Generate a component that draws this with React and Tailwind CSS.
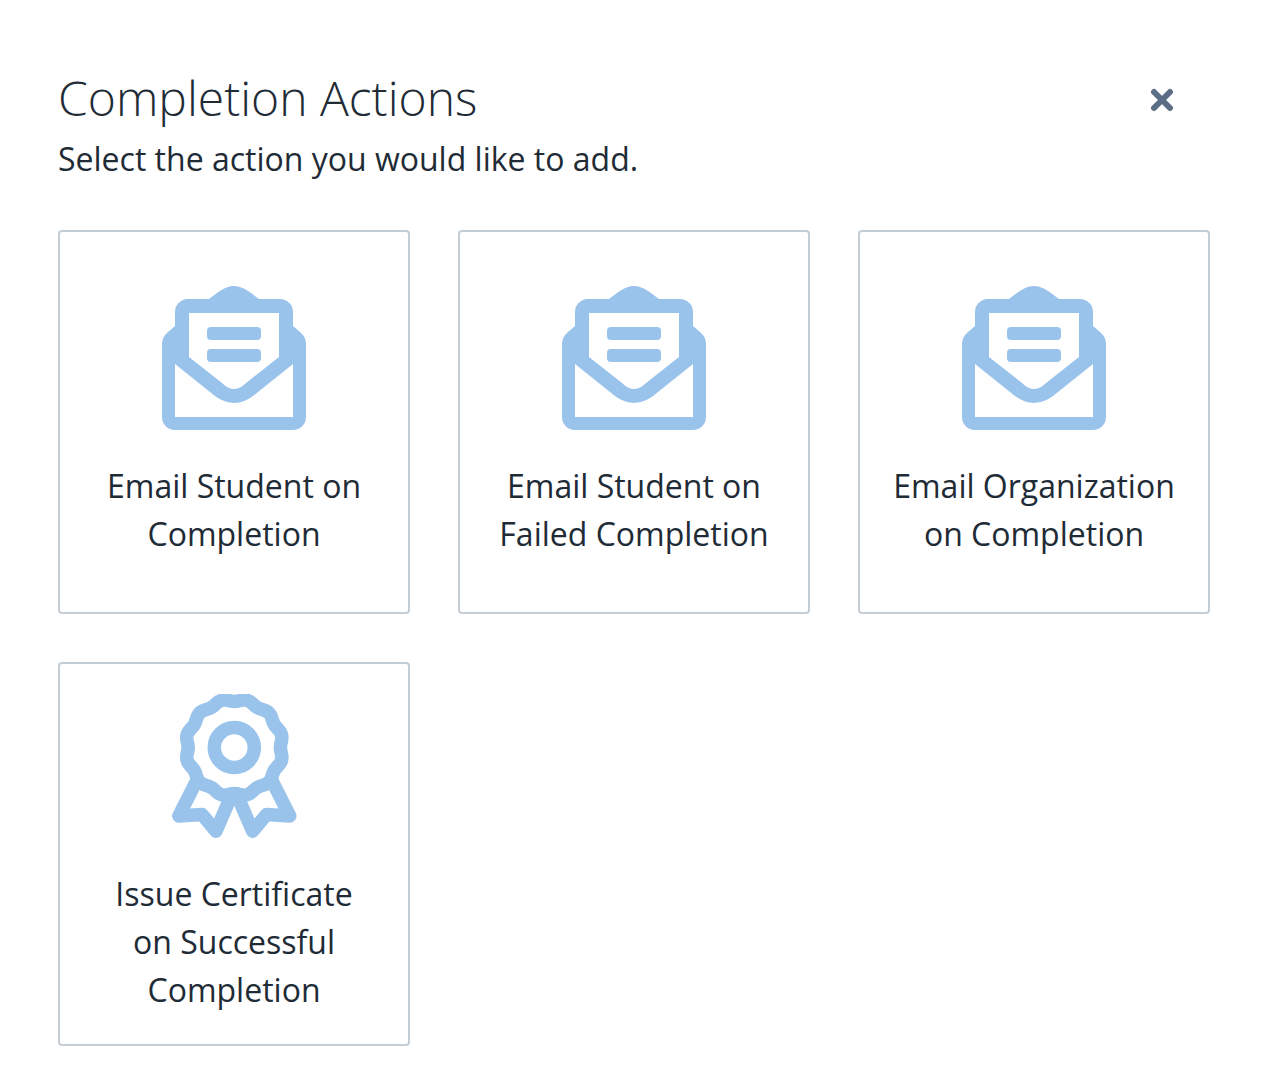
// Wavy seal outline for the certificate icon
const sealPoints = [];
for (let deg = 0; deg < 360; deg += 2) {
  const t = (deg * Math.PI) / 180;
  const r = 47.5 - 1.4 * Math.cos(12 * t);
  sealPoints.push(`${(62.3 + r * Math.sin(t)).toFixed(2)} ${(53.5 - r * Math.cos(t)).toFixed(2)}`);
}
const sealPath = `M${sealPoints.join('L')}Z`;

function EnvelopeIcon() {
  return (
    <svg width="144" height="144" viewBox="0 0 144 144" className="shrink-0 text-[#99c3eb]">
      <path
        fill="currentColor"
        fillRule="evenodd"
        d="M47 13C55 7 63 0 72 0C81 0 89 7 97 13H118A13 13 0 0 1 131 26V40L138 46Q144 51 144 58V131A13 13 0 0 1 131 144H13A13 13 0 0 1 0 131V58Q0 51 6 46L13 40V26A13 13 0 0 1 26 13ZM27 27V71L60 97Q66 103 72 103Q78 103 84 97L117 71V27ZM13 78V131H131V78L96 106Q84 117 72 117Q60 117 48 106Z"
      />
      <rect x="45" y="41" width="54" height="13" rx="4" fill="currentColor" />
      <rect x="45" y="63" width="54" height="13" rx="4" fill="currentColor" />
    </svg>
  );
}

function CertificateIcon() {
  return (
    <svg width="125" height="144" viewBox="0 0 125 144" fill="none" stroke="currentColor" strokeWidth="13.5" strokeLinejoin="round" strokeLinecap="round" className="shrink-0 text-[#99c3eb]">
      <path d={sealPath} />
      <circle cx="62.3" cy="53.5" r="20" strokeWidth="13.5" />
      <path d="M24 88L6.8 122L30 120.5L44 137.2L60 100" />
      <path d="M100.6 88L117.8 122L94.6 120.5L80.6 137.2L64.6 100" />
    </svg>
  );
}

function ActionCard({ icon, lines }) {
  return (
    <button className="h-[384px] bg-white border-2 border-[#c4cdd5] rounded flex flex-col items-center justify-center gap-8 text-[32px] leading-[48px] text-[#212b36]">
      {icon}
      <span>
        {lines.map((line) => (
          <span key={line} className="block whitespace-nowrap">{line}</span>
        ))}
      </span>
    </button>
  );
}

export default function App() {
  return (
    <div className="min-h-[1084px] bg-white pt-[66px] pl-[58px] pr-[54px] font-['Open_Sans',sans-serif]">
      {/* Encabezado */}
      <div className="flex items-start justify-between">
        <div>
          <h1 className="text-[48px] leading-[64px] font-light text-[#212b36]">Completion Actions</h1>
          <p className="text-[32px] leading-[48px] text-[#212b36] mt-[5px]">Select the action you would like to add.</p>
        </div>
        <button className="mr-[36px] mt-[22px] text-[#5b6e85]">
          <svg width="24" height="24" viewBox="0 0 24 24" className="block">
            <path d="M4 4L20 20M20 4L4 20" stroke="currentColor" strokeWidth="6" strokeLinecap="round" />
          </svg>
        </button>
      </div>

      {/* Acciones */}
      <div className="grid grid-cols-[352px_352px_352px] gap-12 mt-[47px]">
        <ActionCard icon={<EnvelopeIcon />} lines={['Email Student on', 'Completion']} />
        <ActionCard icon={<EnvelopeIcon />} lines={['Email Student on', 'Failed Completion']} />
        <ActionCard icon={<EnvelopeIcon />} lines={['Email Organization', 'on Completion']} />
        <ActionCard icon={<CertificateIcon />} lines={['Issue Certificate', 'on Successful', 'Completion']} />
      </div>
    </div>
  );
}
